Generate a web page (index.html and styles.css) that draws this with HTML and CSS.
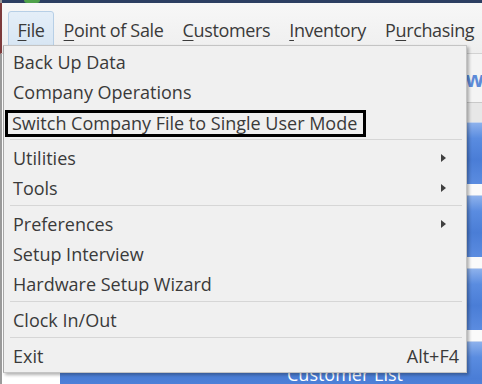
FILE: index.html
```html
<!DOCTYPE html>
<html lang="en">

<head>
  <meta charset="UTF-8">
  <meta name="viewport" content="width=device-width, initial-scale=1.0">
  <title>Point of Sale - File menu</title>

  <link rel="stylesheet" href="styles.css">
</head>

<body>
  <div class="window">
    <div class="titlebar"><span class="app-icon"></span></div>

    <nav class="menubar">
      <div class="menu-title active"><u>F</u>ile</div>
      <div class="menu-title"><u>P</u>oint of Sale</div>
      <div class="menu-title"><u>C</u>ustomers</div>
      <div class="menu-title"><u>I</u>nventory</div>
      <div class="menu-title">P<u>u</u>rchasing</div>
    </nav>

    <main class="home">
      <aside class="home-side"></aside>
      <section class="home-main">
        <header class="home-head">
          <h2>Overview</h2>
        </header>
        <div class="home-strip"></div>
        <div class="tiles">
          <div class="tile">Make a Sale</div>
          <div class="tile">Receive Items</div>
          <div class="tile">Item List</div>
          <div class="tile">Customer List</div>
        </div>
      </section>
    </main>

    <div class="dropdown">
      <div class="item"><span class="label">Back Up Data</span></div>
      <div class="item"><span class="label">Company Operations</span></div>
      <div class="item"><span class="label marked">Switch Company File to Single User Mode</span></div>
      <div class="sep"></div>
      <div class="item"><span class="label">Utilities</span><span class="arrow"></span></div>
      <div class="item"><span class="label">Tools</span><span class="arrow"></span></div>
      <div class="sep"></div>
      <div class="item"><span class="label">Preferences</span><span class="arrow"></span></div>
      <div class="item"><span class="label">Setup Interview</span></div>
      <div class="item"><span class="label">Hardware Setup Wizard</span></div>
      <div class="sep"></div>
      <div class="item"><span class="label">Clock In/Out</span></div>
      <div class="sep"></div>
      <div class="item"><span class="label">Exit</span><span class="shortcut">Alt+F4</span></div>
    </div>
  </div>
</body>

</html>
```

FILE: styles.css
```css
* {
  margin: 0;
  padding: 0;
  box-sizing: border-box;
}

body {
  width: 482px;
  height: 384px;
  overflow: hidden;
  font-family: 'Open Sans', 'Noto Sans', sans-serif;
  color: #3a3a3a;
  background: #ffffff;
}

.window {
  position: relative;
  height: 384px;
  border-left: 2px solid #9a9a9a;
}

.titlebar {
  height: 3px;
  background: #2c3f62;
}

.app-icon {
  display: block;
  width: 16px;
  height: 3px;
  margin-left: 22px;
  background: #4fa24a;
  border-radius: 0 0 6px 6px;
}

/* menu bar */
.menubar {
  height: 51px;
  display: flex;
  padding: 8px 0 0 6px;
  background: linear-gradient(#f7f7f7, #eeeeee);
  border-bottom: 1px solid #d2d2d2;
  border-left: 2px solid #7d3a3a;
  margin-left: -2px;
}

.menu-title {
  height: 39px;
  line-height: 37px;
  padding: 0 8.5px;
  border: 1px solid transparent;
  font-size: 18px;
  letter-spacing: -0.35px;
  color: #3a3a3a;
  white-space: nowrap;
}

.menu-title u {
  text-underline-offset: 3px;
  text-decoration-thickness: 1px;
}

.menu-title.active {
  background: linear-gradient(#e4eef8, #d6e5f3);
  border-color: #b7cfe6;
  border-radius: 3px 3px 0 0;
}

/* home page behind the menu */
.home {
  display: grid;
  grid-template-columns: 58px 1fr;
  height: 330px;
}

.home-side {
  background: #ffffff;
}

.home-main {
  display: flex;
  flex-direction: column;
}

.home-head {
  height: 49px;
  display: flex;
  justify-content: flex-end;
  align-items: center;
  background: #f4f4f4;
  border-bottom: 1px solid #c9c9c9;
}

.home-head h2 {
  font-size: 22px;
  font-weight: 700;
  color: #5d8bd8;
  margin-right: -2px;
}

.home-strip {
  height: 19px;
  background: #e7e7e7;
}

.tiles {
  display: flex;
  flex-direction: column;
  gap: 11px;
  background: #fafafa;
}

.tile {
  height: 62px;
  padding: 20px 0 0 227px;
  background: linear-gradient(#8db1ec, #5a8ce0 25%, #4a7dd6 60%, #5b8ce0);
  border-top: 1px solid #c3d3ee;
  color: #ffffff;
  font-size: 18px;
  white-space: nowrap;
}

/* file dropdown */
.dropdown {
  position: absolute;
  top: 45px;
  left: 1px;
  width: 464px;
  height: 328px;
  padding: 1px 0;
  background: #f0f0f0;
  border: 1px solid #c4c4c4;
  border-left-color: #a8a8a8;
  box-shadow: 2px 2px 3px rgba(0, 0, 0, 0.3);
}

.item {
  height: 30px;
  display: flex;
  align-items: center;
  padding: 0 20px 0 9px;
  font-size: 18px;
  white-space: nowrap;
}

.label {
  flex: 1;
}

.label.marked {
  flex: none;
  margin: 3px 0 0 -8px;
  padding: 0 6px 0 4px;
  line-height: 21px;
  border: 3px solid #000000;
}

.arrow {
  width: 0;
  height: 0;
  border-left: 5px solid #404040;
  border-top: 4px solid transparent;
  border-bottom: 4px solid transparent;
}

.shortcut {
  margin-right: -13px;
}

.sep {
  height: 1px;
  margin: 2px 4px 3px 6px;
  background: #d6d6d6;
}
```
